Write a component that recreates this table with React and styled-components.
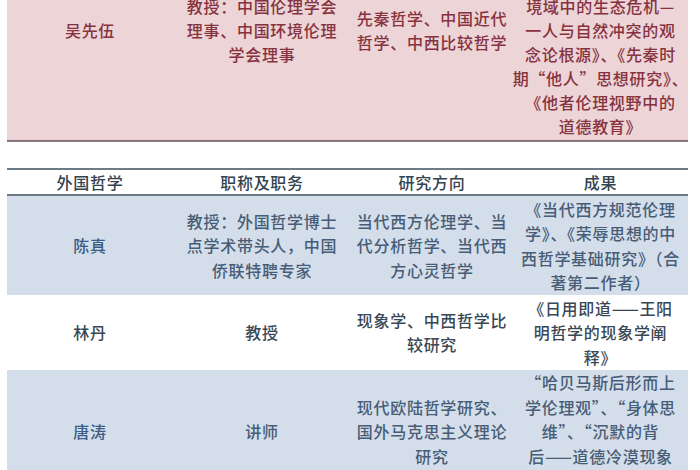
import React from "react"
import styled, { createGlobalStyle } from "styled-components"

const GlobalStyle = createGlobalStyle`
  html, body {
    margin: 0;
    padding: 0;
    background: #ffffff;
    overflow: hidden;
  }
  body {
    font-family: "Noto Sans CJK SC", "Noto Sans", sans-serif;
  }
`

const tones = {
  pink: { bg: "#ecd4d7", text: "#87323f", name: "#87323f", lh: 24, pad: "1px 0" },
  blue: { bg: "#d4deea", text: "#475d77", name: "#3b5c86", lh: 24.5, pad: "0.5px 0" },
  white: { bg: "#ffffff", text: "#3a4755", name: "#3a4755", lh: 24.5, pad: "0.5px 0" },
  head: { bg: "#ffffff", text: "#33434f", name: "#33434f", lh: 24, pad: "0" },
}

const Page = styled.div`
  width: 681px;
  padding-left: 7px;
  margin-top: -79px;
`

const Table = styled.div`
  display: flex;
  flex-direction: column;
  border-top: ${p => (p.$ruled ? "2px solid #6d7b87" : "none")};
  border-bottom: ${p => (p.$closed ? "2px solid #857a7d" : "none")};
  margin-bottom: ${p => p.$gap || 0}px;
`

const Row = styled.div`
  display: grid;
  grid-template-columns: 166px 178px 162px 175px;
  align-items: center;
  background: ${p => tones[p.$tone].bg};
  color: ${p => tones[p.$tone].text};
  line-height: ${p => tones[p.$tone].lh}px;
  padding: ${p => tones[p.$tone].pad};
  border-bottom: ${p =>
    p.$tone === "head"
      ? "2px solid #6d7b87"
      : p.$tone === "pink"
      ? "1px solid #efc3c9"
      : "none"};
`

const Cell = styled.div`
  display: flex;
  flex-direction: column;
  align-items: center;
  text-align: center;
  font-size: 16px;
  font-weight: 500;
  letter-spacing: 0.7px;
  color: ${p => (p.$name ? tones[p.$tone].name : "inherit")};
`

const Line = styled.span`
  display: block;
  white-space: nowrap;
`

const pinkRow = {
  name: "吴先伍",
  title: ["教授：中国伦理学会", "理事、中国环境伦理", "学会理事"],
  field: ["先秦哲学、中国近代", "哲学、中西比较哲学"],
  works: [
    "《和谐之美——中国",
    "古代生态伦理思想研",
    "究》、《现代性",
    "境域中的生态危机—",
    "一人与自然冲突的观",
    "念论根源》、《先秦时",
    "期“他人”思想研究》、",
    "《他者伦理视野中的",
    "道德教育》",
  ],
}

const header = ["外国哲学", "职称及职务", "研究方向", "成果"]

const blueRows = [
  {
    tone: "blue",
    name: "陈真",
    title: ["教授：外国哲学博士", "点学术带头人，中国", "侨联特聘专家"],
    field: ["当代西方伦理学、当", "代分析哲学、当代西", "方心灵哲学"],
    works: [
      "《当代西方规范伦理",
      "学》、《荣辱思想的中",
      "西哲学基础研究》（合",
      "著第二作者）",
    ],
  },
  {
    tone: "white",
    name: "林丹",
    title: ["教授"],
    field: ["现象学、中西哲学比", "较研究"],
    works: ["《日用即道——王阳", "明哲学的现象学阐", "释》"],
  },
  {
    tone: "blue",
    name: "唐涛",
    title: ["讲师"],
    field: ["现代欧陆哲学研究、", "国外马克思主义理论", "研究"],
    works: [
      "“哈贝马斯后形而上",
      "学伦理观”、“身体思",
      "维”、“沉默的背",
      "后——道德冷漠现象",
      "的伦理学分析”",
    ],
  },
]

const Lines = ({ items }) =>
  items.map((t, i) => <Line key={i}>{t}</Line>)

const PersonRow = ({ tone, person }) => (
  <Row $tone={tone}>
    <Cell $name $tone={tone}>
      <Line>{person.name}</Line>
    </Cell>
    <Cell>
      <Lines items={person.title} />
    </Cell>
    <Cell>
      <Lines items={person.field} />
    </Cell>
    <Cell>
      <Lines items={person.works} />
    </Cell>
  </Row>
)

export default function App() {
  return (
    <Page>
      <GlobalStyle />
      <Table $closed $gap={26}>
        <PersonRow tone="pink" person={pinkRow} />
      </Table>
      <Table $ruled>
        <Row $tone="head">
          {header.map(h => (
            <Cell key={h}>
              <Line>{h}</Line>
            </Cell>
          ))}
        </Row>
        {blueRows.map(r => (
          <PersonRow key={r.name} tone={r.tone} person={r} />
        ))}
      </Table>
    </Page>
  )
}
